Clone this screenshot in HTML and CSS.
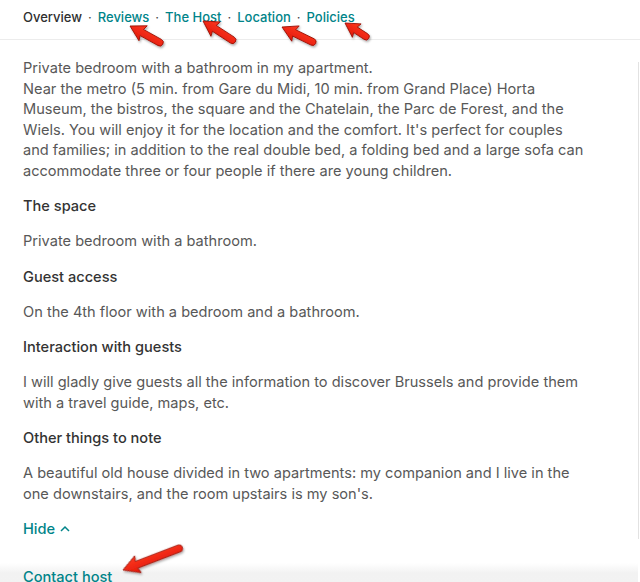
FILE: index.html
```html
<!DOCTYPE html>
<html>
<head>
<meta charset="utf-8">
<link rel="stylesheet" href="styles.css">
</head>
<body>
<div class="page">
  <nav class="tabs">
    <span class="tab current">Overview</span><span class="dot">·</span>
    <a class="tab">Reviews</a><span class="dot">·</span>
    <a class="tab">The Host</a><span class="dot">·</span>
    <a class="tab">Location</a><span class="dot">·</span>
    <a class="tab">Policies</a>
  </nav>
  <div class="main">
    <div class="content">
      <p class="text">Private bedroom with a bathroom in my apartment.<br>Near the metro (5 min. from Gare du Midi, 10 min. from Grand Place) Horta Museum, the bistros, the square and the Chatelain, the Parc de Forest, and the Wiels. You will enjoy it for the location and the comfort. It's perfect for couples and families; in addition to the real double bed, a folding bed and a large sofa can accommodate three or four people if there are young children.</p>
      <h3 class="heading">The space</h3>
      <p class="text">Private bedroom with a bathroom.</p>
      <h3 class="heading">Guest access</h3>
      <p class="text">On the 4th floor with a bedroom and a bathroom.</p>
      <h3 class="heading">Interaction with guests</h3>
      <p class="text">I will gladly give guests all the information to discover Brussels and provide them with a travel guide, maps, etc.</p>
      <h3 class="heading">Other things to note</h3>
      <p class="text">A beautiful old house divided in two apartments: my companion and I live in the one downstairs, and the room upstairs is my son's.</p>
      <a class="toggle">Hide <svg class="chev" width="10" height="7" viewBox="0 0 10 7"><path d="M1 6 L5 2 L9 6" fill="none" stroke="#008489" stroke-width="1.5"/></svg></a>
    </div>
    <div class="side"></div>
  </div>
  <div class="footer"><a class="contact">Contact host</a></div>

  <svg class="arrows" width="640" height="582" viewBox="0 0 640 582">
    <defs>
      <filter id="sh" x="-30%" y="-30%" width="160%" height="160%">
        <feDropShadow dx="1" dy="1.5" stdDeviation="1" flood-color="#000" flood-opacity="0.35"/>
      </filter>
      <linearGradient id="rg" x1="0" y1="-9" x2="0" y2="9" gradientUnits="userSpaceOnUse">
        <stop offset="0" stop-color="#ff3a22"/>
        <stop offset="1" stop-color="#e01808"/>
      </linearGradient>
    </defs>
    <g filter="url(#sh)" fill="url(#rg)" stroke="#9a1006" stroke-width="0.8" stroke-linejoin="round">
      <path transform="translate(130 26) rotate(29)" d="M0 0 L15 -8.5 L13.5 -3.5 L34 -3.5 A3.5 3.5 0 0 1 34 3.5 L13.5 3.5 L15 8.5 Z"/>
      <path transform="translate(203 21) rotate(33)" d="M0 0 L15 -8.5 L13.5 -3.5 L35 -3.5 A3.5 3.5 0 0 1 35 3.5 L13.5 3.5 L15 8.5 Z"/>
      <path transform="translate(282 27) rotate(26)" d="M0 0 L15 -8.5 L13.5 -3.5 L34 -3.5 A3.5 3.5 0 0 1 34 3.5 L13.5 3.5 L15 8.5 Z"/>
      <path transform="translate(345 23) rotate(33)" d="M0 0 L14 -8 L12.5 -3.3 L25 -3.3 A3.3 3.3 0 0 1 25 3.3 L12.5 3.3 L14 8 Z"/>
      <path transform="translate(123 570) rotate(-21)" d="M0 0 L16 -9 L14.5 -3.6 L60 -3.6 A3.6 3.6 0 0 1 60 3.6 L14.5 3.6 L16 9 Z"/>
    </g>
  </svg>
</div>
</body>
</html>
```

FILE: styles.css
```css
html, body {
  margin: 0;
  padding: 0;
  background: #fff;
}
body {
  font-family: Inter, Lato, sans-serif;
  color: #4f4f4f;
  overflow: hidden;
}
.page {
  position: relative;
  width: 640px;
  height: 582px;
  overflow: hidden;
}
.tabs {
  height: 40px;
  box-sizing: border-box;
  border-bottom: 1px solid #ececec;
  padding: 0 0 6px 23px;
  display: flex;
  align-items: center;
  font-size: 13px;
  font-weight: 500;
  line-height: 20px;
}
.tab {
  color: #008489;
}
.tab.current {
  color: #2f2f2f;
}
.dot {
  color: #484848;
  margin: 0 6px;
  font-weight: 400;
}
.main {
  display: flex;
}
.content {
  flex: 1;
  padding: 18px 50px 0 23px;
  display: flex;
  flex-direction: column;
  align-items: flex-start;
  gap: 14.6px;
}
.side {
  width: 1px;
  margin-top: 22px;
  margin-right: 1px;
  background: #e2e2e2;
}
.text {
  margin: 0;
  font-size: 14.6px;
  line-height: 20.6px;
  font-weight: 400;
  color: #585858;
}
.heading {
  margin: 0;
  font-size: 14.6px;
  line-height: 20.6px;
  font-weight: 500;
  color: #333;
}
.toggle {
  color: #008489;
  font-size: 14.6px;
  line-height: 20.6px;
  font-weight: 500;
  display: flex;
  align-items: center;
  gap: 5px;
}
.chev {
  margin-top: -2px;
}
.footer {
  margin-top: 24px;
  height: 60px;
  padding-left: 23px;
  background: linear-gradient(#ffffff, #f2f2f2 10px, #f3f3f3);
  box-shadow: inset -2px 0 0 #fff;
}
.contact {
  display: block;
  padding-top: 4px;
  color: #008489;
  font-size: 14.6px;
  line-height: 20.6px;
  font-weight: 500;
}
.arrows {
  position: absolute;
  left: 0;
  top: 0;
  pointer-events: none;
}
```
